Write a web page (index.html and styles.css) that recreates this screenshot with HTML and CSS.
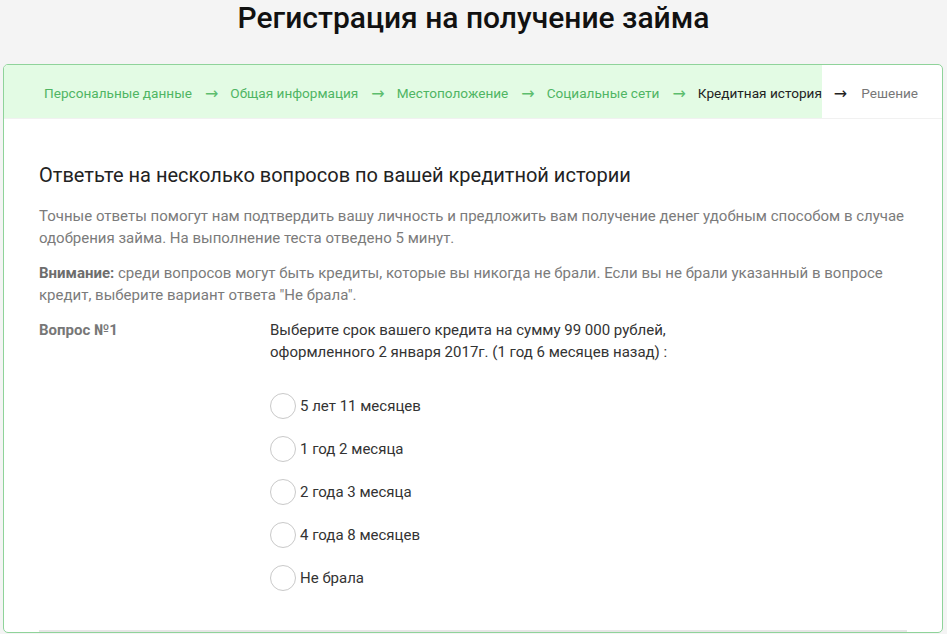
FILE: index.html
```html
<!DOCTYPE html>
<html lang="ru">
<head>
<meta charset="utf-8">
<title>Регистрация на получение займа</title>
<link rel="stylesheet" href="styles.css">
</head>
<body>
<h1 class="page-title">Регистрация на получение займа</h1>
<div class="card">
  <nav class="steps">
    <div class="steps-done">
      <span class="step done">Персональные данные</span><span class="arrow">→</span>
      <span class="step done">Общая информация</span><span class="arrow">→</span>
      <span class="step done">Местоположение</span><span class="arrow">→</span>
      <span class="step done">Социальные сети</span><span class="arrow">→</span>
      <span class="step active">Кредитная история</span>
    </div>
    <span class="arrow dark">→</span>
    <span class="step todo">Решение</span>
  </nav>
  <div class="card-body">
    <h2 class="section-title">Ответьте на несколько вопросов по вашей кредитной истории</h2>
    <p class="note">Точные ответы помогут нам подтвердить вашу личность и предложить вам получение денег удобным способом в случае одобрения займа. На выполнение теста отведено 5 минут.</p>
    <p class="note second"><b>Внимание:</b> среди вопросов могут быть кредиты, которые вы никогда не брали. Если вы не брали указанный в вопросе кредит, выберите вариант ответа "Не брала".</p>
    <div class="question">
      <div class="q-label">Вопрос №1</div>
      <div class="q-main">
        <div class="q-text">Выберите срок вашего кредита на сумму 99 000 рублей,<br>оформленного 2 января 2017г. (1 год 6 месяцев назад) :</div>
        <ul class="options">
          <li class="option"><span class="radio"></span><span>5 лет 11 месяцев</span></li>
          <li class="option"><span class="radio"></span><span>1 год 2 месяца</span></li>
          <li class="option"><span class="radio"></span><span>2 года 3 месяца</span></li>
          <li class="option"><span class="radio"></span><span>4 года 8 месяцев</span></li>
          <li class="option"><span class="radio"></span><span>Не брала</span></li>
        </ul>
      </div>
    </div>
    <div class="divider"></div>
  </div>
</div>
</body>
</html>
```
FILE: styles.css
```css
html, body {
  margin: 0;
  padding: 0;
}
body {
  background: #f4f4f4;
  font-family: Roboto, "Noto Sans", sans-serif;
  color: #222;
  height: 634px;
  overflow: hidden;
}
.page-title {
  margin: 0 0 28px;
  font-size: 30px;
  line-height: 36px;
  font-weight: 500;
  text-align: center;
  color: #111;
}
.card {
  margin: 0 4px 0 3px;
  background: #fff;
  border: 1px solid #8fd39a;
  border-radius: 5px;
  overflow: hidden;
}
.steps {
  display: flex;
  align-items: stretch;
  height: 53px;
  font-size: 13.6px;
  border-bottom: 1px solid #f1f1f1;
}
.steps-done {
  display: flex;
  align-items: center;
  background: #e3fbe4;
  padding: 3px 0 0 40px;
}
.step, .arrow {
  white-space: nowrap;
}
.steps > .arrow, .steps > .step {
  display: flex;
  align-items: center;
  padding-top: 3px;
}
.arrow {
  margin: 0 12px 0 13px;
  font-family: "DejaVu Sans", sans-serif;
  font-size: 16px;
  color: #5cbd6d;
}
.steps > .arrow.dark {
  color: #222;
  margin-left: 12px;
  margin-right: 14px;
}
.step.done {
  color: #4fb563;
}
.step.active {
  color: #222;
}
.step.todo {
  color: #777;
}
.card-body {
  padding: 0 35px;
}
.section-title {
  margin: 42px 0 0;
  font-size: 20px;
  line-height: 28px;
  font-weight: 400;
  color: #222;
}
.note {
  margin: 16px 0 0;
  font-size: 15px;
  line-height: 22px;
  color: #7b7b7b;
}
.note.second {
  margin-top: 13px;
}
.note b {
  font-weight: 700;
  color: #6d6d6d;
}
.question {
  display: flex;
  margin-top: 13px;
}
.q-label {
  width: 231px;
  flex: none;
  font-size: 15px;
  line-height: 22px;
  font-weight: 700;
  color: #777;
}
.q-text {
  font-size: 15px;
  line-height: 22px;
  color: #333;
}
.options {
  list-style: none;
  margin: 30px 0 0;
  padding: 0;
  display: flex;
  flex-direction: column;
  gap: 17px;
}
.option {
  display: flex;
  align-items: center;
  gap: 4px;
  font-size: 15px;
  color: #333;
  height: 26px;
}
.radio {
  width: 24px;
  height: 24px;
  border: 1px solid #c9c9c9;
  border-radius: 50%;
  background: #fff;
  flex: none;
}
.divider {
  margin-top: 39px;
  height: 2px;
  background: #e6e6e6;
}
```
